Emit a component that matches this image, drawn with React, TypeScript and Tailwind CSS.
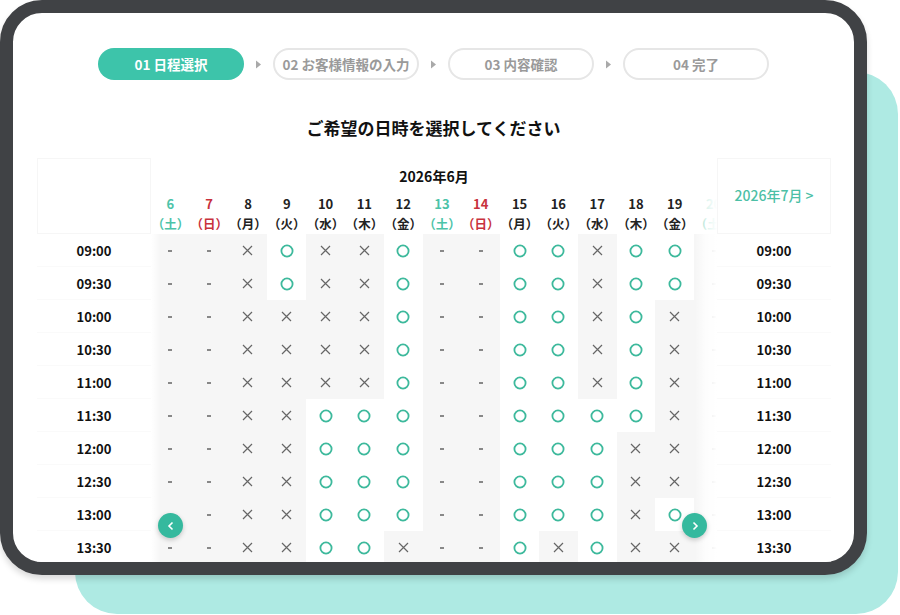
import React from "react";

const jp = '"Noto Sans CJK JP", "Noto Sans", sans-serif';

const steps = ["01 日程選択", "02 お客様情報の入力", "03 内容確認", "04 完了"];

const days = [
    { d: 6, w: "土" },
    { d: 7, w: "日" },
    { d: 8, w: "月" },
    { d: 9, w: "火" },
    { d: 10, w: "水" },
    { d: 11, w: "木" },
    { d: 12, w: "金" },
    { d: 13, w: "土" },
    { d: 14, w: "日" },
    { d: 15, w: "月" },
    { d: 16, w: "火" },
    { d: 17, w: "水" },
    { d: 18, w: "木" },
    { d: 19, w: "金" },
    { d: 20, w: "土" },
];

// o = available, x = full, - = closed
const slots: [string, string][] = [
    ["09:00", "--xoxxo--ooxoo-"],
    ["09:30", "--xoxxo--ooxoo-"],
    ["10:00", "--xxxxo--ooxox-"],
    ["10:30", "--xxxxo--ooxox-"],
    ["11:00", "--xxxxo--ooxox-"],
    ["11:30", "--xxooo--oooox-"],
    ["12:00", "--xxooo--oooxx-"],
    ["12:30", "--xxooo--oooxx-"],
    ["13:00", "--xxooo--oooxo-"],
    ["13:30", "--xxoox--oxoxx-"],
];

const dayColor = (w: string) =>
    w === "土" ? "text-[#4cc3a8]" : w === "日" ? "text-[#c8323d]" : "text-[#222]";

const Mark = ({ v }: { v: string }) => {
    if (v === "o")
        return (
            <svg width="14" height="14" viewBox="0 0 14 14">
                <circle cx="7" cy="7" r="5.6" fill="none" stroke="#3db99c" strokeWidth="1.8" />
            </svg>
        );
    if (v === "x")
        return (
            <svg width="11" height="11" viewBox="0 0 11 11">
                <path d="M1 1L10 10M10 1L1 10" stroke="#666" strokeWidth="1.2" />
            </svg>
        );
    return <span className="block w-[4px] h-[2px] bg-[#888]" />;
};

const Arrow = () => (
    <svg width="7" height="9" viewBox="0 0 7 9">
        <path d="M1 0.5L6 4.5L1 8.5Z" fill="#a9a9a9" />
    </svg>
);

const TimeColumn = ({ header }: { header?: React.ReactNode }) => (
    <div className="w-[114px] shrink-0 bg-white relative z-10">
        <div className="h-[76px] border border-[#f6f6f6] flex items-center justify-center">
            {header}
        </div>
        {slots.map(([t]) => (
            <div
                key={t}
                className="h-[33px] flex items-center justify-center border-b border-[#fafafa] text-[13px] font-bold text-[#111] pt-[1px]"
            >
                {t}
            </div>
        ))}
    </div>
);

export default function App() {
    return (
        <div className="relative w-[900px] h-[615px] bg-white overflow-hidden" style={{ fontFamily: jp }}>
            {/* mint backdrop */}
            <div className="absolute left-[75px] top-[72px] w-[823px] h-[542px] rounded-[42px] bg-[#aeeae3]" />

            {/* tablet */}
            <div className="absolute left-0 top-0 w-[867px] h-[575px] rounded-[42px] border-[13px] border-[#404245] bg-white overflow-hidden shadow-[0_4px_6px_rgba(0,0,0,0.15)]">
                <div className="flex items-center justify-center gap-[11px] pt-[35px]">
                    {steps.map((s, i) => (
                        <React.Fragment key={s}>
                            {i > 0 && <Arrow />}
                            <div
                                className={`w-[146px] h-[32px] rounded-full flex items-center justify-center text-[13.5px] font-bold ${
                                    i === 0
                                        ? "bg-[#3dc4aa] text-white"
                                        : "border-2 border-[#e6e6e6] text-[#9a9a9a]"
                                }`}
                            >
                                {s}
                            </div>
                        </React.Fragment>
                    ))}
                </div>

                <h1 className="mt-[38px] text-center text-[17px] leading-[20px] font-bold text-[#111]">
                    ご希望の日時を選択してください
                </h1>

                <div className="relative mt-[20px] ml-[24px] flex">
                    <TimeColumn />

                    <div className="relative w-[566px] shrink-0 overflow-hidden">
                        <div className="h-[36px] flex items-center justify-center text-[14px] font-bold text-[#111] leading-[20px]">
                            2026年6月
                        </div>
                        <div className="grid grid-cols-[repeat(15,38.8px)] w-max">
                            {days.map((c) => (
                                <div
                                    key={c.d}
                                    className={`h-[40px] flex flex-col items-center text-[13px] font-bold leading-[20px] ${dayColor(c.w)}`}
                                >
                                    <span>{c.d}</span>
                                    <span className="text-[12.5px] whitespace-nowrap">（{c.w}）</span>
                                </div>
                            ))}
                            {slots.map(([t, row]) =>
                                row.split("").map((v, i) => (
                                    <div
                                        key={t + i}
                                        className={`h-[33px] flex items-center justify-center ${
                                            v === "o" ? "bg-white" : "bg-[#f6f6f6]"
                                        }`}
                                    >
                                        <Mark v={v} />
                                    </div>
                                ))
                            )}
                        </div>
                        <div className="absolute left-0 top-0 bottom-0 w-[10px] bg-gradient-to-r from-white to-transparent" />
                        <div className="absolute right-0 top-0 bottom-0 w-[22px] bg-gradient-to-l from-white via-white/80 to-transparent" />
                    </div>

                    <TimeColumn
                        header={
                            <span className="text-[14px] font-medium text-[#4cbfa6] pb-[2px]">2026年7月 &gt;</span>
                        }
                    />

                    <button className="absolute left-[121px] top-[355px] w-[25px] h-[25px] rounded-full bg-[#35b99e] flex items-center justify-center shadow-[0_2px_5px_rgba(0,0,0,0.2)] z-20">
                        <svg width="10" height="10" viewBox="0 0 10 10">
                            <path d="M6.5 1.5L3 5L6.5 8.5" fill="none" stroke="white" strokeWidth="1.6" />
                        </svg>
                    </button>
                    <button className="absolute left-[645px] top-[355px] w-[25px] h-[25px] rounded-full bg-[#35b99e] flex items-center justify-center shadow-[0_2px_5px_rgba(0,0,0,0.2)] z-20">
                        <svg width="10" height="10" viewBox="0 0 10 10">
                            <path d="M3.5 1.5L7 5L3.5 8.5" fill="none" stroke="white" strokeWidth="1.6" />
                        </svg>
                    </button>
                </div>
            </div>
        </div>
    );
}
